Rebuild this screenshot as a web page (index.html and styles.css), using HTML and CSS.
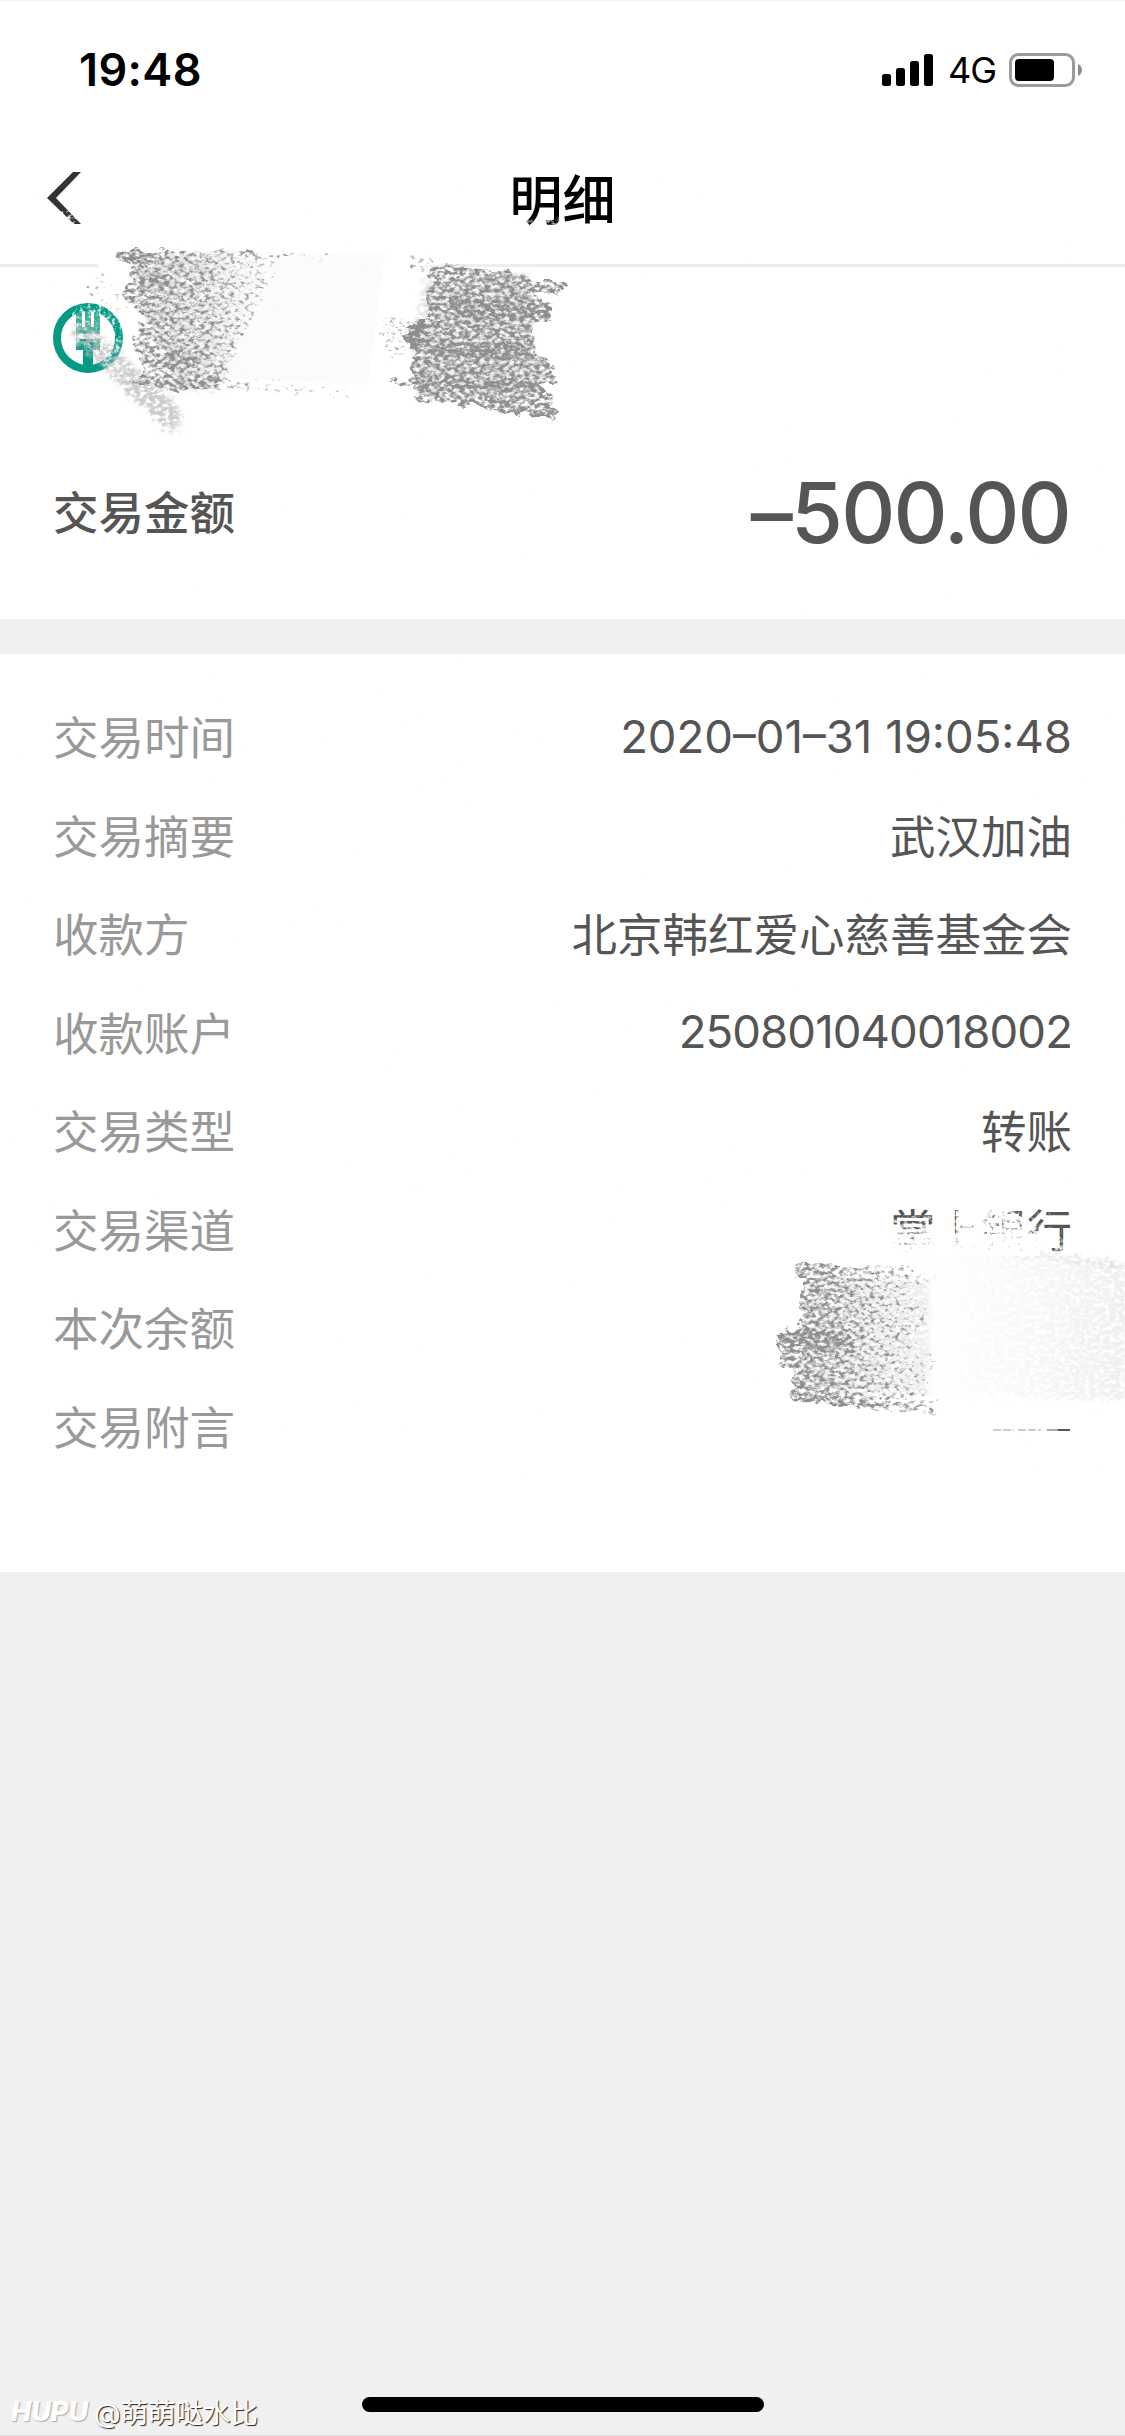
FILE: index.html
```html
<!DOCTYPE html>
<html lang="zh-CN">
<head>
  <meta charset="UTF-8">
  <meta name="viewport" content="width=device-width, initial-scale=1">
  <title>明细</title>
  <link rel="stylesheet" href="styles.css">
</head>
<body>
  <div class="screen">
    <div class="status-bar">
      <span class="time">19:48</span>
      <div class="status-right">
        <svg class="signal" width="51" height="32" viewBox="0 0 51 32">
          <rect x="0" y="20" width="9" height="12" rx="2.5"/>
          <rect x="14" y="14" width="9" height="18" rx="2.5"/>
          <rect x="28" y="7" width="9" height="25" rx="2.5"/>
          <rect x="42" y="0" width="9" height="32" rx="2.5"/>
        </svg>
        <span class="network">4G</span>
        <svg class="battery" width="74" height="34" viewBox="0 0 74 34">
          <rect x="1.5" y="1.5" width="63" height="31" rx="8" fill="none" stroke="#9b9b9b" stroke-width="3"/>
          <rect x="6" y="6" width="39" height="22" rx="4" fill="#000"/>
          <path d="M69 11C74.300 13 74.300 21 69 23Z" fill="#8c8c8c"/>
        </svg>
      </div>
    </div>

    <div class="nav-bar">
      <svg class="back" width="38" height="56" viewBox="0 0 38 56">
        <path d="M28 1H36L11 27L36 53H29L2 27Z" fill="#333"/>
      </svg>
      <h1>明细</h1>
    </div>

    <div class="summary">
      <svg class="bank-logo" width="70" height="70" viewBox="0 0 70 70">
        <circle cx="35" cy="35" r="31" fill="none" stroke="#069a84" stroke-width="8"/>
        <path d="M23 2H29V24H32V0H38V24H41V2H47V31H23Z" fill="#069a84" opacity=".8"/>
        <path d="M23 36H47V47H40V64H30V47H23Z" fill="#069a84"/>
      </svg>
      <div class="amount-row">
        <span class="amount-label">交易金额</span>
        <span class="amount">–500.00</span>
      </div>
    </div>

    <div class="details">
      <div class="row"><span class="label">交易时间</span><span class="value date">2020–01–31 19:05:48</span></div>
      <div class="row"><span class="label">交易摘要</span><span class="value">武汉加油</span></div>
      <div class="row"><span class="label">收款方</span><span class="value">北京韩红爱心慈善基金会</span></div>
      <div class="row"><span class="label">收款账户</span><span class="value account">250801040018002</span></div>
      <div class="row"><span class="label">交易类型</span><span class="value">转账</span></div>
      <div class="row"><span class="label">交易渠道</span><span class="value">掌上银行</span></div>
      <div class="row"><span class="label">本次余额</span></div>
      <div class="row"><span class="label">交易附言</span></div>
    </div>

    <div class="footer">
      <div class="watermark"><span class="brand">HUPU</span><span>@萌萌哒水比</span></div>
      <div class="home-indicator"></div>
    </div>

    <!-- crayon strokes over the private fields -->
    <svg class="scribbles" width="1125" height="2436" viewBox="0 0 1125 2436">
      <defs>
        <filter id="crayon" filterUnits="userSpaceOnUse" x="0" y="180" width="1125" height="1300" color-interpolation-filters="sRGB">
          <feTurbulence type="fractalNoise" baseFrequency="0.07 0.1" numOctaves="2" seed="4" result="wave"/>
          <feTurbulence type="fractalNoise" baseFrequency="0.2 0.28" numOctaves="3" seed="7" result="n"/>
          <feDisplacementMap in="SourceGraphic" in2="wave" scale="16" xChannelSelector="R" yChannelSelector="G" result="s"/>
          <feColorMatrix in="n" type="matrix" values="0 0 0 0 0  0 0 0 0 0  0 0 0 0 0  1 0 0 0 0" result="g"/>
          <feComposite in="s" in2="g" operator="arithmetic" k2="3.5" k3="3.5" k4="-3.1" result="a"/>
          <feFlood flood-color="#8e8e8e"/>
          <feComposite in2="a" operator="in"/>
        </filter>
        <filter id="smudge" filterUnits="userSpaceOnUse" x="0" y="180" width="1125" height="1300" color-interpolation-filters="sRGB">
          <feTurbulence type="fractalNoise" baseFrequency="0.2 0.26" numOctaves="3" seed="11" result="n"/>
          <feDisplacementMap in="SourceGraphic" in2="n" scale="22" xChannelSelector="R" yChannelSelector="G" result="s"/>
          <feGaussianBlur in="s" stdDeviation="1" result="b"/>
          <feColorMatrix in="n" type="matrix" values="0 0 0 0 0  0 0 0 0 0  0 0 0 0 0  4 0 0 0 -1.2" result="g"/>
          <feComposite in="b" in2="g" operator="in"/>
        </filter>
        <filter id="eraser" filterUnits="userSpaceOnUse" x="0" y="180" width="1125" height="1300" color-interpolation-filters="sRGB">
          <feTurbulence type="fractalNoise" baseFrequency="0.25 0.3" numOctaves="3" seed="3" result="n"/>
          <feColorMatrix in="n" type="matrix" values="0 0 0 0 0  0 0 0 0 0  0 0 0 0 0  1 0 0 0 0" result="g"/>
          <feComposite in="SourceGraphic" in2="g" operator="arithmetic" k2="2.5" k3="2.5" k4="-2.2" result="a"/>
          <feFlood flood-color="#fff"/>
          <feComposite in2="a" operator="in"/>
        </filter>
        <linearGradient id="fadeLeft">
          <stop offset="0" stop-opacity=".52"/>
          <stop offset=".55" stop-opacity=".44"/>
          <stop offset="1" stop-opacity=".26"/>
        </linearGradient>
        <linearGradient id="fadeBalance">
          <stop offset="0" stop-opacity=".54"/>
          <stop offset=".35" stop-opacity=".5"/>
          <stop offset="1" stop-opacity=".28"/>
        </linearGradient>
        <linearGradient id="softLeft">
          <stop offset="0" stop-color="#aaa" stop-opacity=".34"/>
          <stop offset=".5" stop-color="#bbb" stop-opacity=".34"/>
          <stop offset="1" stop-color="#ddd" stop-opacity=".12"/>
        </linearGradient>
        <linearGradient id="softRight">
          <stop offset="0" stop-color="#ddd" stop-opacity="0"/>
          <stop offset="1" stop-color="#ccc" stop-opacity=".34"/>
        </linearGradient>
        <linearGradient id="eraseChannel">
          <stop offset="0" stop-opacity=".72"/>
          <stop offset=".6" stop-opacity=".58"/>
          <stop offset="1" stop-opacity=".2"/>
        </linearGradient>
      </defs>

      <path d="M95 262H480L395 268V278H110Z" fill="#fff"/>
      <g filter="url(#smudge)">
        <path d="M135 254L275 252L230 350L222 392L180 390L140 300Z" fill="url(#softLeft)"/>
        <path d="M73 327L88 322L182 410L178 430L168 430L112 378L75 338Z" fill="#bbb" opacity=".75"/>
        <path d="M425 280L530 272L538 400L420 395L412 345Z" fill="#aaa" opacity=".3"/>
        <path d="M810 1275L930 1280L930 1395L800 1390Z" fill="#aaa" opacity=".2"/>
        <path d="M920 1250L1010 1248L1135 1265V1402L940 1393Z" fill="url(#softRight)"/>
        <path d="M905 1246L1008 1250L1125 1266" fill="none" stroke="#ddd" stroke-width="5" opacity=".7"/>
      </g>
      <path d="M275 256L385 252L368 385L225 378L220 360Z" fill="#eee" opacity=".22"/>
      <g filter="url(#eraser)">
        <path d="M70 298H101V352H76Z" opacity=".38"/>
        <path d="M98 300H128V376H104Z" opacity=".44"/>
        <path d="M58 211H84V228H58Z" opacity=".42"/>
        <path d="M505 217H562V230H505Z" opacity=".44"/>
      </g>
      <g filter="url(#crayon)">
        <path d="M119 250L285 252L268 288L236 350L220 388L176 392L131 384L146 372L138 360L132 342L146 318L123 300L124 290L134 280L131 268L118 260Z" fill="url(#fadeLeft)"/>
        <path d="M118 251H153L148 262L122 264ZM133 276L172 277L164 287L133 286ZM150 355L198 350L202 368L160 370Z" opacity=".18"/>
        <path d="M131 380L225 378L272 386L236 390L177 392Z" opacity=".16"/>
        <path d="M200 374L365 390L355 398L220 388ZM245 254L340 252L325 258H250Z" opacity=".26"/>
        <path d="M85 290L105 270L131 312L110 316Z" opacity=".26"/>
        <path d="M434 266L523 271L533 281H562V292L532 293L551 306L552 318L534 328L534 350L555 362L557 380L538 383L549 394L558 412L554 420L510 412L412 398L415 384L389 384L410 376L415 348L402 334L430 318L424 296L428 285Z" opacity=".54"/>
        <path d="M450 298L550 308V319L456 318ZM422 346L532 344V357L430 356ZM412 378L545 382V390L414 386ZM460 399L556 412V420L470 405Z" opacity=".18"/>
        <path d="M383 315L426 322L418 356L385 355ZM407 252L436 258L434 276L410 268ZM436 261L475 268H436Z" opacity=".34"/>
        <path d="M794 1264L904 1268L937 1278L938 1286L905 1288L928 1310L930 1322L910 1334L934 1358L930 1374L925 1395L938 1402L936 1415L790 1400L791 1368L781 1368L777 1330L799 1328L800 1300L806 1278L796 1275Z" fill="url(#fadeBalance)"/>
        <path d="M788 1394L938 1408V1416L788 1400ZM779 1330L860 1333L850 1350L785 1348Z" opacity=".2"/>
      </g>

      <g filter="url(#eraser)">
        <path d="M888 1218L1000 1206L1074 1244V1256H888Z" opacity=".45"/>
        <path d="M888 1224H940V1234H888Z" opacity=".3"/>
        <path d="M890 1234H1040V1256H890Z" opacity=".65"/>
        <path d="M935 1204H953V1256H935Z" opacity="1"/>
        <path d="M956 1204H1066V1252H956Z" fill="url(#eraseChannel)" opacity=".8"/>
      </g>
      <path d="M993 1430H1014M1018 1430H1041" stroke="#ccc" stroke-width="2" stroke-dasharray="8 2"/>
      <path d="M1047 1430H1058" stroke="#aaa" stroke-width="2"/>
      <path d="M1058 1430H1070" stroke="#555" stroke-width="2"/>
    </svg>
  </div>
</body>
</html>
```
FILE: styles.css
```css
* {
  box-sizing: border-box;
}

html, body {
  margin: 0;
  padding: 0;
}

body {
  background: #f0f0f0;
  font-family: Inter, "Noto Sans CJK SC", sans-serif;
  color: #555;
}

.screen {
  position: relative;
  width: 1125px;
  height: 2436px;
  display: flex;
  flex-direction: column;
  overflow: hidden;
  border-bottom: 1px solid #ddd;
}

.status-bar {
  height: 132px;
  padding: 0 42px 0 79px;
  display: flex;
  align-items: center;
  justify-content: space-between;
  background: #fff;
  border-top: 1px solid #f5f5f5;
  color: #000;
}

.time {
  font-size: 45px;
  font-weight: 600;
  line-height: 54px;
  margin-top: 7px;
  letter-spacing: 0.4px;
}

.status-right {
  display: flex;
  align-items: center;
  margin-top: 6px;
}

.network {
  font-size: 36px;
  line-height: 40px;
  width: 46px;
  margin: 0 15px 0;
  letter-spacing: -1px;
}

.nav-bar {
  height: 135px;
  padding: 2px 45px 0;
  display: grid;
  grid-template-columns: 60px 1fr 60px;
  align-items: center;
  background: #fff;
  border-bottom: 3px solid #eee;
}

.nav-bar h1 {
  margin: 0;
  padding-top: 4px;
  font-size: 53px;
  font-weight: 500;
  line-height: 80px;
  text-align: center;
  color: #000;
}

.summary {
  height: 352px;
  padding: 36px 55px 0 53px;
  background: #fff;
}

.bank-logo {
  display: block;
}

.amount-row {
  height: 140px;
  margin-top: 69px;
  display: flex;
  align-items: center;
  justify-content: space-between;
}

.amount-label {
  padding-bottom: 4px;
  font-size: 45.5px;
  font-weight: 500;
}

.amount {
  font-size: 84px;
  font-weight: 500;
  letter-spacing: -1.8px;
}

.details {
  height: 918px;
  margin-top: 35px;
  padding: 32px 53px 0 53px;
  background: #fff;
}

.row {
  height: 98.5px;
  display: flex;
  align-items: center;
  justify-content: space-between;
  font-size: 45.5px;
}

.label {
  color: #999;
}

.date,
.account {
  padding-top: 2px;
}

.account {
  letter-spacing: -0.9px;
}

.footer {
  flex: 1;
  display: grid;
  grid-template-columns: 362px 402px 1fr;
  align-items: end;
}

.watermark {
  display: flex;
  align-items: center;
  gap: 4px;
  padding-left: 11px;
  height: 42px;
  margin-bottom: 3px;
  color: #fff;
  font-size: 27.5px;
  text-shadow: 1px 1px 1px #222;
}

.brand {
  width: 79px;
  font-size: 27px;
  font-weight: 800;
  font-style: italic;
  text-shadow: 1px 1px 1px #aaa;
}

.home-indicator {
  height: 15px;
  margin-bottom: 23px;
  border-radius: 8px;
  background: #000;
}

.scribbles {
  position: absolute;
  top: 0;
  left: 0;
  pointer-events: none;
}
```
